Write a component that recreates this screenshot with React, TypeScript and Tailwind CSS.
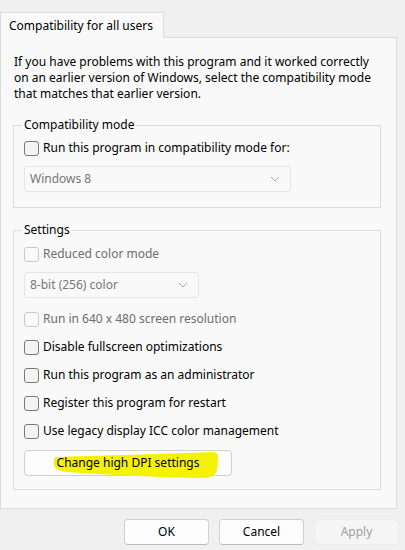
import React from "react";

const font = { fontFamily: '"Noto Sans", "Liberation Sans", sans-serif' };

function Check({ label, disabled }: { label: string; disabled?: boolean }) {
  return (
    <div className="flex h-[16px] items-center">
      <span
        className={
          disabled
            ? "h-[15px] w-[15px] shrink-0 rounded-[3px] border border-[#c8c8c8] bg-[#f9f9f9]"
            : "h-[15px] w-[15px] shrink-0 rounded-[3px] border border-[#7a7a7a] bg-[#f3f3f3]"
        }
      />
      <span className={disabled ? "ml-[4px] text-[#6d6d6d]" : "ml-[4px] text-black"}>{label}</span>
    </div>
  );
}

function Select({ value, width }: { value: string; width: string }) {
  return (
    <div
      className={`flex h-[26px] items-center justify-between rounded-[3px] border border-[#e5e5e5] bg-[#f9f9f9] pl-[5px] pr-[10px] text-[#777777] ${width}`}
    >
      <span>{value}</span>
      <svg width="10" height="6" viewBox="0 0 10 6" fill="none">
        <path d="M1 1l4 4 4-4" stroke="#a8a8a8" strokeWidth="1" />
      </svg>
    </div>
  );
}

function Button({ label, disabled }: { label: string; disabled?: boolean }) {
  return (
    <button
      className={
        disabled
          ? "h-[26px] w-[85px] rounded-[4px] border border-[#ebebeb] bg-[#f5f5f5] text-[#9d9d9d]"
          : "h-[26px] w-[85px] rounded-[4px] border border-[#d0d0d0] border-b-[#bcbcbc] bg-[#fdfdfd] text-black"
      }
    >
      {label}
    </button>
  );
}

export default function App() {
  return (
    <div className="flex h-[550px] w-[405px] flex-col bg-[#f0f0f0] text-[12px] leading-[16px]" style={font}>
      {/* Tab */}
      <div className="mt-[12px] flex">
        <div className="relative z-10 -mb-px flex h-[26px] w-[164px] items-center border border-b-0 border-[#dcdcdc] bg-[#f9f9f9] pl-[8px]">
          Compatibility for all users
        </div>
      </div>

      {/* Panel */}
      <div className="h-[472px] w-[397px] border border-[#dcdcdc] bg-[#f9f9f9] px-[12px] pt-[16px]">
        <p className="pl-[1px]">
          If you have problems with this program and it worked correctly on an earlier version of Windows, select the
          compatibility mode that matches that earlier version.
        </p>

        <fieldset className="mt-[15px] w-[368px] border border-[#dcdcdc] px-[10px] pb-[15px]">
          <legend className="ml-[-2px] px-[2px]">Compatibility mode</legend>
          <div className="mt-[7px]">
            <Check label="Run this program in compatibility mode for:" />
          </div>
          <div className="mt-[10px]">
            <Select value="Windows 8" width="w-[267px]" />
          </div>
        </fieldset>

        <fieldset className="mt-[14px] w-[368px] border border-[#dcdcdc] px-[10px] pb-[13px]">
          <legend className="ml-[-2px] px-[2px] text-black">Settings</legend>
          <div className="mt-[8px]">
            <Check label="Reduced color mode" disabled />
          </div>
          <div className="mt-[10px]">
            <Select value="8-bit (256) color" width="w-[175px]" />
          </div>
          <div className="mt-[13px] flex flex-col gap-[12px]">
            <Check label="Run in 640 x 480 screen resolution" disabled />
            <Check label="Disable fullscreen optimizations" />
            <Check label="Run this program as an administrator" />
            <Check label="Register this program for restart" />
            <Check label="Use legacy display ICC color management" />
          </div>
          <div className="relative mt-[11px] flex h-[26px] w-[208px] items-center justify-center rounded-[4px] border border-[#d0d0d0] bg-[#fdfdfd]">
            <svg className="absolute left-0 top-0 overflow-visible" width="208" height="26" viewBox="0 0 208 26">
              <path
                d="M31 6 C50 5 75 5 100 4 C130 3 160 2 185 1 C191 1 194 3 193 7 L192 19 C191 24 186 27 178 27 C160 27 135 26 110 25 C85 24 60 22 42 21 C34 20 29 18 29 13 C29 9 29 6 31 6 Z"
                fill="#f5f200"
              />
            </svg>
            <span className="relative text-black">Change high DPI settings</span>
          </div>
        </fieldset>
      </div>

      {/* Buttons */}
      <div className="mt-[10px] flex justify-end gap-[10px] pr-[6px]">
        <Button label="OK" />
        <Button label="Cancel" />
        <Button label="Apply" disabled />
      </div>
    </div>
  );
}
